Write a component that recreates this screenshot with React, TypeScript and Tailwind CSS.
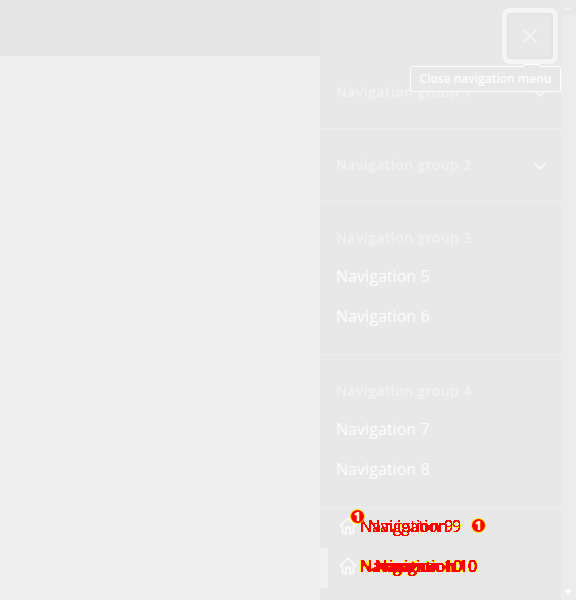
import React from "react";

const Chevron = () => (
  <svg width="14" height="8" viewBox="0 0 14 8" className="relative top-px mr-[-7px]" fill="none" stroke="#f7f7f7" strokeWidth="2.2">
    <path d="M1 1l6 5.8L13 1" />
  </svg>
);

function Group({ title, items, chevron }: { title: string; items?: string[]; chevron?: boolean }) {
  return (
    <section className="border-b border-[#ededed] px-4 pt-6">
      <div className="flex h-6 items-center justify-between pr-[5px]">
        <h3 className="text-sm font-semibold tracking-[0.4px] text-[#f2f2f2] [-webkit-text-stroke:0.15px_#f2f2f2]">{title}</h3>
        {chevron && <Chevron />}
      </div>
      {items ? (
        <div className="pt-[6px] pb-[18px]">
          {items.map((t) => (
            <div key={t} className="flex h-10 items-center text-base tracking-[0.05px] text-[#fefefe]">{t}</div>
          ))}
        </div>
      ) : <div className="h-6" />}
    </section>
  );
}

const House = () => (
  <svg width="18" height="18" viewBox="0 0 18 18" fill="none" stroke="#fafafa" strokeWidth="1.8">
    <path d="M.7 9.2L9 1.2l8.3 8M3.5 7.5V16.3H7V10.5h4v5.8h3.5V7.5" />
  </svg>
);

const Badge = () => (
  <span className="flex h-[15px] w-[15px] items-center justify-center rounded-full border border-[#ff0] bg-[#f00] text-xs font-bold leading-none text-white [text-shadow:0_0_1px_#ff0]">1</span>
);

const mark = "whitespace-pre text-base leading-6 text-[#f00]";

function IconItem({ text, badge, offset, effect }: { text: string; badge?: boolean; offset: string; effect: string }) {
  return (
    <div className="relative flex h-10 items-center pb-[4px] pl-[19px]">
      <House />
      <span className={`relative ml-[3px] ${effect}`}>
        <span className={mark}>{text}</span>
        <span className={`absolute top-0 ${offset} ${mark}`}>{text}</span>
      </span>
      {badge && (
        <>
          <span className="absolute left-[30px] top-px"><Badge /></span>
          <span className="absolute left-[151px] top-[10px]"><Badge /></span>
        </>
      )}
    </div>
  );
}

export default function App() {
  return (
    <div className="flex h-[600px] w-[576px] overflow-hidden bg-[#eeeeee] font-['Open_Sans','Noto_Sans',sans-serif]">
      <svg width="0" height="0" className="absolute">
        <filter id="edge" x="-5%" y="-20%" width="120%" height="140%" colorInterpolationFilters="sRGB">
          <feComponentTransfer in="SourceGraphic" result="ink">
            <feFuncA type="linear" slope="30" intercept="-9" />
          </feComponentTransfer>
          <feGaussianBlur in="SourceAlpha" stdDeviation="0.6" result="soft" />
          <feFlood floodColor="#ff0" />
          <feComposite in2="soft" operator="in" result="yellow" />
          <feComponentTransfer in="yellow" result="halo">
            <feFuncA type="linear" slope="30" intercept="-5" />
          </feComponentTransfer>
          <feMerge><feMergeNode in="halo" /><feMergeNode in="ink" /></feMerge>
        </filter>
        <filter id="dense" x="-5%" y="-20%" width="120%" height="140%" colorInterpolationFilters="sRGB">
          <feGaussianBlur in="SourceGraphic" stdDeviation="0.8 0.55" result="soft" />
          <feComponentTransfer in="soft" result="ink">
            <feFuncA type="linear" slope="30" intercept="-8" />
          </feComponentTransfer>
          <feFlood floodColor="#ff0" />
          <feComposite in2="soft" operator="in" result="yellow" />
          <feComponentTransfer in="yellow" result="halo">
            <feFuncA type="linear" slope="30" intercept="-3" />
          </feComponentTransfer>
          <feMerge><feMergeNode in="halo" /><feMergeNode in="ink" /></feMerge>
        </filter>
      </svg>
      <main className="w-[320px]"><div className="h-14 bg-[#e6e6e6]" /></main>
      <nav className="relative w-[241px] bg-[#e8e8e8]">
        <div className="h-14" />
        <Group title="Navigation group 1" chevron />
        <Group title="Navigation group 2" chevron />
        <Group title="Navigation group 3" items={["Navigation 5", "Navigation 6"]} />
        <Group title="Navigation group 4" items={["Navigation 7", "Navigation 8"]} />
        <IconItem text="Navigation 9" badge offset="left-[8px]" effect="[filter:url(#edge)]" />
        <IconItem text="Navigation 10" offset="left-[15px]" effect="[filter:url(#dense)]" />
        <div className="absolute left-0 top-[548px] h-10 w-2 bg-[#f1f1f1]" />
        <button className="absolute left-[182px] top-2 flex h-14 w-14 items-center justify-center rounded-lg border-[5px] border-[#f5f5f5]">
          <span className="flex h-[46px] w-[46px] shrink-0 items-center justify-center rounded-[4px] border-2 border-[#e3e3e3]">
            <svg width="14" height="14" viewBox="0 0 14 14" stroke="#f5f5f5" strokeWidth="1.8"><path d="M.7.7l12.6 12.6M13.3.7L.7 13.3" /></svg>
          </span>
        </button>
        <div className="absolute left-[90px] top-[66px] flex h-[26px] w-[151px] items-center justify-center rounded-[2px] border border-white bg-[#e8e8e8] text-xs font-semibold text-[#fcfcfc] [-webkit-text-stroke:0.15px_#fcfcfc]">
          Close navigation menu
          <span className="absolute left-[112px] top-[-3px] h-[3px] w-[17px] rounded-t-[2px] border border-b-0 border-white bg-[#e8e8e8]" />
        </div>
      </nav>
      <aside className="flex w-[15px] flex-col items-center justify-between bg-[#ececec]">
        <svg width="15" height="15"><path fill="#e8e8e8" d="M0 0h15v15H0z" /><path fill="#f3f3f3" d="M3 10l4-4 4 4z" /></svg>
        <svg width="15" height="15"><path fill="#fff" d="M3 5h8l-4 4z" /></svg>
      </aside>
    </div>
  );
}
